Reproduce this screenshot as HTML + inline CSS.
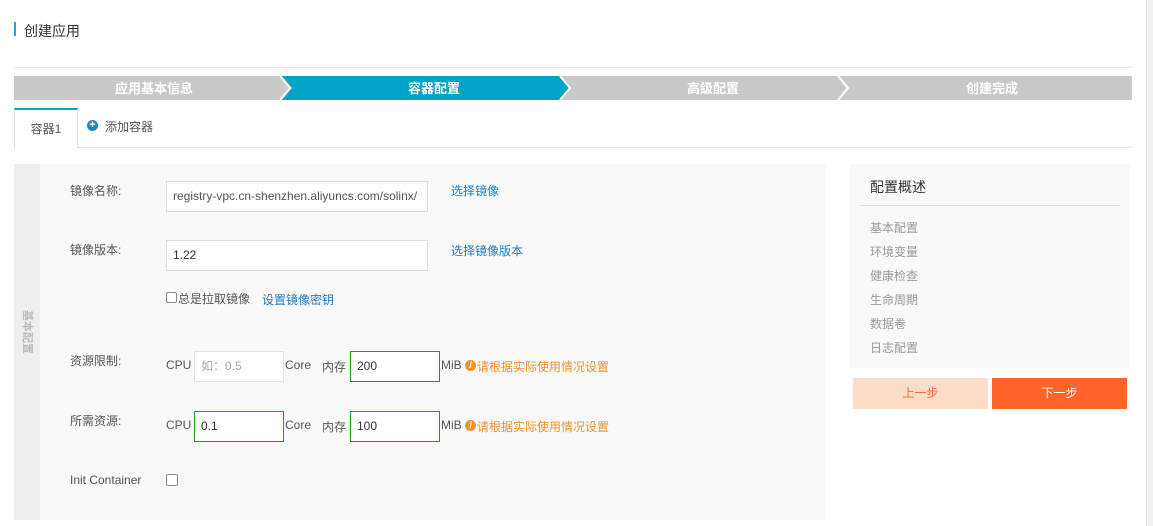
<!DOCTYPE html>
<html><head><meta charset="utf-8"><style>
*{box-sizing:border-box;margin:0;padding:0}
body{width:1153px;height:526px;background:#fff;font-family:"Liberation Sans","Noto Sans CJK SC",sans-serif;font-size:12px;color:#333;position:relative;overflow:hidden}
.a{position:absolute}
.inp{position:absolute;background:#fff;border:1px solid #ddd;height:31px;line-height:29px;padding-left:6px;font-size:12px;color:#333}
.g{border-color:#1a9a1a}
.lbl{position:absolute;font-size:12px;color:#555}
.link{position:absolute;color:#1e7cc8;font-size:12px}
.warn{position:absolute;color:#f5902b;font-size:12px}
.sum{position:absolute;left:870px;color:#999;font-size:12px}
</style></head><body>
<div class="a" style="left:14px;top:22px;width:2px;height:14px;background:#2a9fd6"></div>
<div class="a" style="left:24px;top:21px;font-size:14px;color:#333">创建应用</div>
<div class="a" style="left:14px;top:67px;width:1118px;height:1px;background:#e2e2e2"></div>
<svg class="a" style="left:14px;top:76px" width="1118" height="24">
<rect x="0" y="0" width="1118" height="24" fill="#c9c9c9"/>
<polygon points="268,0 546,0 556,12 546,24 268,24 278,12" fill="#00a2c5"/>
<polyline points="266,0 276,12 266,24" fill="none" stroke="#fff" stroke-width="2"/>
<polyline points="546,0 556,12 546,24" fill="none" stroke="#fff" stroke-width="2"/>
<polyline points="824,0 834,12 824,24" fill="none" stroke="#fff" stroke-width="2"/>
<g fill="#fff" font-size="13" font-weight="bold" text-anchor="middle" font-family="Liberation Sans,Noto Sans CJK SC,sans-serif">
<text x="140" y="17">应用基本信息</text><text x="420" y="17">容器配置</text><text x="699" y="17">高级配置</text><text x="978" y="17">创建完成</text></g>
</svg>
<div class="a" style="left:14px;top:147px;width:1118px;height:1px;background:#e2e2e2"></div>
<div class="a" style="left:14px;top:108px;width:64px;height:40px;background:#fff;border:1px solid #e2e2e2;border-top:2px solid #00a2c5;border-bottom:none;text-align:center;line-height:38px;color:#555">容器1</div>
<div class="a" style="left:87px;top:120px;width:11px;height:11px;border-radius:50%;background:#1e88c8;color:#fff;font-size:11px;line-height:11px;text-align:center;font-weight:bold">+</div>
<div class="a" style="left:105px;top:118px;color:#555">添加容器</div>
<div class="a" style="left:14px;top:164px;width:812px;height:356px;background:#f9f9f9"></div>
<div class="a" style="left:14px;top:164px;width:26px;height:356px;background:#efefef"></div>
<div class="a" style="left:3px;top:325px;width:48px;height:14px;line-height:14px;text-align:center;color:#bbb;font-size:11px;font-weight:bold;transform:rotate(90deg)">基本配置</div>
<div class="lbl" style="left:70px;top:182px">镜像名称:</div>
<div class="inp" style="left:166px;top:181px;width:262px;color:#555">registry-vpc.cn-shenzhen.aliyuncs.com/solinx/</div>
<div class="link" style="left:451px;top:182px">选择镜像</div>
<div class="lbl" style="left:70px;top:241px">镜像版本:</div>
<div class="inp" style="left:166px;top:240px;width:262px">1.22</div>
<div class="link" style="left:451px;top:242px">选择镜像版本</div>
<div class="a" style="left:166px;top:292px;width:11px;height:11px;border:1px solid #888;border-radius:2px;background:#fff"></div>
<div class="lbl" style="left:178px;top:290px">总是拉取镜像</div>
<div class="link" style="left:262px;top:291px">设置镜像密钥</div>
<div class="lbl" style="left:70px;top:352px">资源限制:</div>
<div class="lbl" style="left:166px;top:358px">CPU</div>
<div class="inp" style="left:194px;top:351px;width:90px;color:#aaa;border-color:#e2e2e2">如：0.5</div>
<div class="lbl" style="left:285px;top:358px">Core</div>
<div class="lbl" style="left:322px;top:358px">内存</div>
<div class="inp g" style="left:350px;top:351px;width:90px">200</div>
<div class="lbl" style="left:441px;top:358px">MiB</div>
<div class="a" style="left:465px;top:360px;width:11px;height:11px;border-radius:50%;background:#f5902b;color:#fff;font-size:9px;line-height:11px;text-align:center;font-style:italic;font-weight:bold">i</div>
<div class="warn" style="left:477px;top:358px">请根据实际使用情况设置</div>
<div class="lbl" style="left:70px;top:412px">所需资源:</div>
<div class="lbl" style="left:166px;top:418px">CPU</div>
<div class="inp g" style="left:194px;top:411px;width:90px">0.1</div>
<div class="lbl" style="left:285px;top:418px">Core</div>
<div class="lbl" style="left:322px;top:418px">内存</div>
<div class="inp g" style="left:350px;top:411px;width:90px">100</div>
<div class="lbl" style="left:441px;top:418px">MiB</div>
<div class="a" style="left:465px;top:420px;width:11px;height:11px;border-radius:50%;background:#f5902b;color:#fff;font-size:9px;line-height:11px;text-align:center;font-style:italic;font-weight:bold">i</div>
<div class="warn" style="left:477px;top:418px">请根据实际使用情况设置</div>
<div class="lbl" style="left:70px;top:473px">Init Container</div>
<div class="a" style="left:166px;top:474px;width:12px;height:12px;border:1px solid #888;border-radius:2px;background:#fff"></div>
<div class="a" style="left:850px;top:164px;width:280px;height:204px;background:#f9f9f9"></div>
<div class="a" style="left:870px;top:177px;font-size:14px;color:#333">配置概述</div>
<div class="a" style="left:860px;top:205px;width:260px;height:1px;background:#ddd"></div>
<div class="sum" style="top:219px">基本配置</div>
<div class="sum" style="top:243px">环境变量</div>
<div class="sum" style="top:267px">健康检查</div>
<div class="sum" style="top:291px">生命周期</div>
<div class="sum" style="top:315px">数据卷</div>
<div class="sum" style="top:339px">日志配置</div>
<div class="a" style="left:853px;top:378px;width:135px;height:31px;background:#fddcca;color:#ff6a2a;text-align:center;line-height:31px">上一步</div>
<div class="a" style="left:992px;top:378px;width:135px;height:31px;background:#ff6427;color:#fff;text-align:center;line-height:31px">下一步</div>
<div class="a" style="left:1146px;top:0;width:7px;height:526px;background:#f1f1f1;border-left:1px solid #e5e5e5"></div>
</body></html>
